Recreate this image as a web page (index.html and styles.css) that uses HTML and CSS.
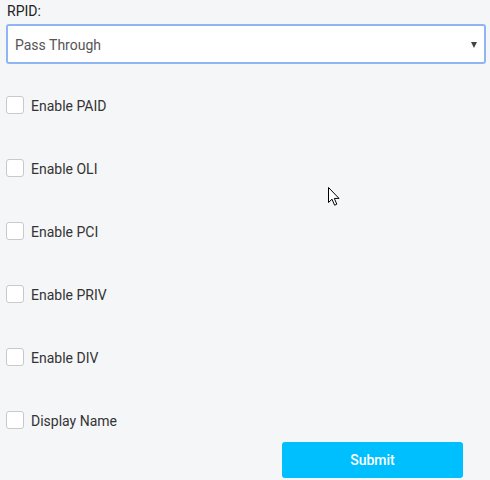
FILE: index.html
```html
<!DOCTYPE html>
<html>
<head>
<meta charset="utf-8">
<link rel="stylesheet" href="styles.css">
</head>
<body>
<div class="form">
  <div class="field-label">RPID:</div>
  <div class="select">
    <span class="select-value">Pass Through</span>
    <span class="select-arrow"></span>
  </div>
  <div class="checks">
    <label class="check"><span class="box"></span><span class="check-text">Enable PAID</span></label>
    <label class="check"><span class="box"></span><span class="check-text">Enable OLI</span></label>
    <label class="check"><span class="box"></span><span class="check-text">Enable PCI</span></label>
    <label class="check"><span class="box"></span><span class="check-text">Enable PRIV</span></label>
    <label class="check"><span class="box"></span><span class="check-text">Enable DIV</span></label>
    <label class="check"><span class="box"></span><span class="check-text">Display Name</span></label>
  </div>
  <div class="actions">
    <button class="submit">Submit</button>
  </div>
</div>
<svg class="cursor" width="13" height="20" viewBox="0 0 13 20">
  <path d="M0.5 0.5 L0.5 15.5 L4 12.2 L6.6 18.2 L8.8 17.2 L6.3 11.4 L11 11.4 Z" fill="#fff" stroke="#000" stroke-width="1" stroke-linejoin="miter"/>
</svg>
</body>
</html>
```

FILE: styles.css
```css
html, body {
  margin: 0;
  padding: 0;
  background: #f5f6f8;
}
body {
  font-family: Roboto, "Liberation Sans", sans-serif;
  font-size: 14px;
  color: #333;
  width: 490px;
  height: 480px;
  overflow: hidden;
  position: relative;
}
.form {
  padding: 1px 0 0 6px;
}
.field-label {
  line-height: 20px;
  color: #222;
  padding-left: 1px;
}
.select {
  margin-top: 3px;
  width: 480px;
  height: 40px;
  box-sizing: border-box;
  border: 2px solid #8fb5f5;
  border-radius: 3px;
  background: #fff;
  display: flex;
  align-items: center;
  justify-content: space-between;
  padding: 2px 7px 0 7px;
}
.select-value {
  color: #555;
  font-size: 14px;
}
.select-arrow {
  width: 0;
  height: 0;
  border-left: 3.5px solid transparent;
  border-right: 3.5px solid transparent;
  border-top: 6px solid #444;
  margin-top: -1px;
}
.checks {
  margin-top: 32px;
  display: flex;
  flex-direction: column;
  gap: 45px;
}
.check {
  display: flex;
  align-items: center;
  height: 18px;
}
.box {
  width: 18px;
  height: 18px;
  box-sizing: border-box;
  border: 1px solid #c9c9c9;
  border-radius: 3px;
  background: #fff;
}
.check-text {
  margin-left: 7px;
  color: #333;
  padding-top: 1px;
}
.actions {
  margin-top: 13px;
  padding-left: 276px;
}
.submit {
  width: 181px;
  height: 36px;
  border: none;
  border-radius: 3px;
  background: #00bfff;
  color: #fff;
  font-family: Roboto, "Liberation Sans", sans-serif;
  font-size: 14px;
  font-weight: 500;
  padding: 0;
}
.cursor {
  position: absolute;
  left: 328px;
  top: 187px;
}
```
